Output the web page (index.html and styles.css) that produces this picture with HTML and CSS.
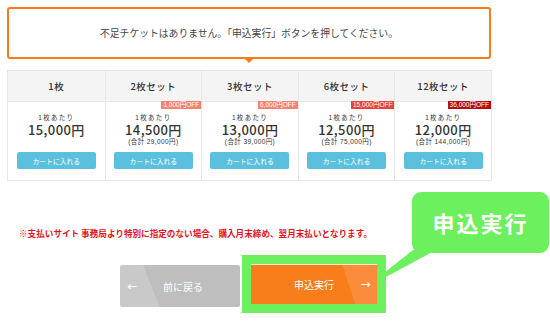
FILE: index.html
```html
<!DOCTYPE html>
<html lang="ja">

<head>
	<meta charset="UTF-8">
	<title>チケット購入</title>
	<link rel="stylesheet" href="styles.css">
</head>

<body>
	<div class="notice">不足チケットはありません。「申込実行」ボタンを押してください。</div>

	<div class="plans">
		<div class="plan">
			<div class="plan-head">1枚</div>
			<div class="plan-body">
				<p class="unit">1枚あたり</p>
				<p class="price">15,000円</p>
				<p class="total">&nbsp;</p>
				<button class="cart">カートに入れる</button>
			</div>
		</div>
		<div class="plan">
			<div class="plan-head">2枚セット</div>
			<div class="plan-body">
				<span class="badge badge-light">1,000円OFF</span>
				<p class="unit">1枚あたり</p>
				<p class="price">14,500円</p>
				<p class="total">(合計 29,000円)</p>
				<button class="cart">カートに入れる</button>
			</div>
		</div>
		<div class="plan">
			<div class="plan-head">3枚セット</div>
			<div class="plan-body">
				<span class="badge badge-light">6,000円OFF</span>
				<p class="unit">1枚あたり</p>
				<p class="price">13,000円</p>
				<p class="total">(合計 39,000円)</p>
				<button class="cart">カートに入れる</button>
			</div>
		</div>
		<div class="plan">
			<div class="plan-head">6枚セット</div>
			<div class="plan-body">
				<span class="badge badge-mid">15,000円OFF</span>
				<p class="unit">1枚あたり</p>
				<p class="price">12,500円</p>
				<p class="total">(合計 75,000円)</p>
				<button class="cart">カートに入れる</button>
			</div>
		</div>
		<div class="plan">
			<div class="plan-head">12枚セット</div>
			<div class="plan-body">
				<span class="badge badge-dark">36,000円OFF</span>
				<p class="unit">1枚あたり</p>
				<p class="price">12,000円</p>
				<p class="total">(合計 144,000円)</p>
				<button class="cart">カートに入れる</button>
			</div>
		</div>
	</div>

	<p class="note">※支払いサイト 事務局より特別に指定のない場合、購入月末締め、翌月末払いとなります。</p>

	<div class="actions">
		<button class="btn-back"><span class="arrow">&larr;</span>前に戻る</button>
		<div class="highlight">
			<button class="btn-submit">申込実行<span class="arrow">&rarr;</span></button>
		</div>
	</div>

	<div class="callout">申込実行</div>
	<svg class="callout-tail" width="60" height="40" viewBox="0 0 60 40">
		<polygon points="33,5 56,5 4,33 4,28" fill="#6cf05e" />
	</svg>
</body>

</html>
```

FILE: styles.css
```css
* {
	box-sizing: border-box;
}

body {
	margin: 0;
	width: 550px;
	height: 327px;
	overflow: hidden;
	position: relative;
	background: #fff;
	font-family: "Noto Sans CJK JP", "Noto Sans", sans-serif;
	color: #333;
}

p {
	margin: 0;
}

button {
	font-family: inherit;
	border: none;
	cursor: pointer;
	padding: 0;
}

.notice {
	position: relative;
	margin: 7px 0 0 7px;
	width: 484px;
	height: 52px;
	border: 2px solid #f97b1a;
	border-radius: 3px;
	font-size: 9.8px;
	line-height: 48px;
	text-align: center;
	color: #444;
}

.notice::after {
	content: "";
	position: absolute;
	left: 234px;
	top: 100%;
	border-left: 6px solid transparent;
	border-right: 6px solid transparent;
	border-top: 6px solid #f97b1a;
}

.plans {
	margin: 11px 0 0 7px;
	width: 485px;
	display: grid;
	grid-template-columns: repeat(5, 1fr);
	border: 1px solid #e6e6e6;
}

.plan + .plan {
	border-left: 1px solid #e6e6e6;
}

.plan-head {
	height: 31px;
	line-height: 31px;
	background: #f4f4f4;
	border-bottom: 1px solid #e6e6e6;
	text-align: center;
	font-size: 9.5px;
	font-weight: 500;
	letter-spacing: 0.5px;
}

.plan-body {
	position: relative;
	height: 78px;
	padding-top: 11px;
	display: flex;
	flex-direction: column;
	align-items: center;
	font-family: "Liberation Sans", "Noto Sans CJK JP", sans-serif;
}

.badge {
	position: absolute;
	top: -1px;
	right: 0;
	height: 8px;
	line-height: 8px;
	padding: 0 2px;
	font-size: 6.5px;
	color: #fff;
}

.badge-light {
	background: #f7836e;
}

.badge-mid {
	background: #e7433a;
}

.badge-dark {
	background: #b20f14;
}

.unit {
	font-size: 6.5px;
	line-height: 9px;
	letter-spacing: 1.3px;
}

.price {
	font-family: "Noto Sans CJK JP", sans-serif;
	font-size: 13px;
	line-height: 15px;
	font-weight: 500;
	letter-spacing: 0.4px;
}

.total {
	font-size: 6.5px;
	line-height: 10px;
	letter-spacing: 0.4px;
}

.cart {
	margin-top: 5px;
	width: 79px;
	height: 17px;
	background: #5bc0de;
	border-radius: 2px;
	color: #fff;
	font-family: "Noto Sans CJK JP", sans-serif;
	font-size: 6.8px;
}

.note {
	margin: 47px 0 0 19px;
	font-size: 8.6px;
	line-height: 10px;
	font-weight: bold;
	color: #e8121b;
}

.actions {
	margin: 17px 0 0 120px;
	display: flex;
	align-items: flex-start;
}

.btn-back {
	margin-top: 10px;
	width: 120px;
	height: 42px;
	background: linear-gradient(68deg, #c9c9c9 37px, #bebebe 37px);
	border-radius: 2px;
	color: #fff;
	font-size: 10px;
	position: relative;
	padding-left: 6px;
}

.btn-back .arrow {
	position: absolute;
	left: 7px;
	top: 14px;
	font-size: 10px;
	font-weight: bold;
}

.highlight {
	margin-left: 2px;
	padding: 9px;
	background: #6cf05e;
}

.btn-submit {
	display: block;
	position: relative;
	width: 126px;
	height: 40px;
	background: linear-gradient(72deg, #f77e1a 99px, #fb8c3c 99px);
	box-shadow: inset 0 1px #fde7d2;
	color: #fff;
	font-size: 10px;
}

.btn-submit .arrow {
	position: absolute;
	right: 6px;
	top: 13px;
	font-size: 10px;
	font-weight: bold;
}

.callout {
	position: absolute;
	left: 412px;
	top: 192px;
	width: 137px;
	height: 61px;
	border-radius: 9px;
	background: #6cf05e;
	color: #fff;
	font-size: 22px;
	font-weight: bold;
	letter-spacing: 2px;
	line-height: 61px;
	text-align: center;
}

.callout-tail {
	position: absolute;
	left: 380px;
	top: 245px;
}
```
